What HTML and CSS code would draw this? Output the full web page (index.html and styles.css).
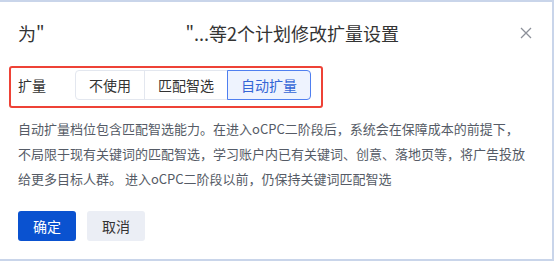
FILE: index.html
```html
<!DOCTYPE html>
<html lang="zh-CN">
<head>
  <meta charset="UTF-8" />
  <meta name="viewport" content="width=device-width, initial-scale=1.0" />
  <title>修改扩量设置</title>
  <link rel="stylesheet" href="styles.css">
</head>
<body>
  <div class="dialog">
    <div class="dialog-header">
      <h1 class="title">为"<span class="plan-name"></span>"...等2个计划修改扩量设置</h1>
      <button type="button" class="close" aria-label="关闭">
        <svg width="12" height="12" viewBox="0 0 12 12">
          <path d="M1 1 L11 11 M11 1 L1 11" stroke="#8c9099" stroke-width="1.3" fill="none" />
        </svg>
      </button>
    </div>

    <div class="field">
      <span class="field-label">扩量</span>
      <div class="segmented">
        <button type="button" class="seg">不使用</button>
        <button type="button" class="seg">匹配智选</button>
        <button type="button" class="seg active">自动扩量</button>
      </div>
    </div>

    <p class="desc">自动扩量档位包含匹配智选能力。在进入oCPC二阶段后，系统会在保障成本的前提下，<br>不局限于现有关键词的匹配智选，学习账户内已有关键词、创意、落地页等，将广告投放<br>给更多目标人群。 进入oCPC二阶段以前，仍保持关键词匹配智选</p>

    <div class="footer">
      <button type="button" class="btn btn-primary">确定</button>
      <button type="button" class="btn">取消</button>
    </div>
  </div>
</body>
</html>
```

FILE: styles.css
```css
* {
  box-sizing: border-box;
}
body {
  margin: 0;
  font-family: "Noto Sans CJK SC", "Noto Sans", sans-serif;
  color: #333333;
  background-color: #FFFFFF;
}
.dialog {
  width: 554px;
  height: 261px;
  background-color: #FFFFFF;
  border-top: 2px solid #c9d5ea;
  border-right: 2px solid #c9d5ea;
  border-bottom: 2px solid #c9d5ea;
}
.dialog-header {
  display: flex;
  align-items: center;
  justify-content: space-between;
  height: 62px;
  padding: 0 20px 0 18px;
}
.title {
  margin: 0;
  font-size: 18px;
  font-weight: normal;
  color: #333333;
}
.plan-name {
  display: inline-block;
  width: 141px;
}
.close {
  border: none;
  background: none;
  padding: 0;
  width: 12px;
  height: 12px;
  cursor: pointer;
  display: flex;
}
.field {
  display: flex;
  align-items: center;
  width: 314px;
  margin: 2px 0 0 9px;
  padding: 2px 8px 6px 7px;
  border: 2px solid #ee4236;
  border-radius: 3px;
}
.field-label {
  width: 57px;
  flex-shrink: 0;
  font-size: 14px;
  color: #333333;
}
.segmented {
  display: flex;
  flex-shrink: 0;
}
.seg {
  height: 30px;
  padding: 0 13px;
  font-family: inherit;
  font-size: 14px;
  white-space: nowrap;
  color: #333333;
  background-color: #FFFFFF;
  border: 1px solid #e3e7ef;
  margin-left: -1px;
  cursor: pointer;
}
.seg:first-child {
  margin-left: 0;
  border-radius: 4px 0 0 4px;
}
.seg:last-child {
  border-radius: 0 4px 4px 0;
}
.seg.active {
  position: relative;
  background-color: #eef3fe;
  border-color: #4f7ff0;
  color: #3466d6;
}
.desc {
  margin: 8px 0 0;
  padding: 0 0 0 18px;
  font-size: 13px;
  line-height: 25px;
  white-space: nowrap;
  color: #555b66;
}
.footer {
  display: flex;
  gap: 11px;
  padding: 20px 18px 0;
}
.btn {
  height: 30px;
  padding: 0 15px;
  font-family: inherit;
  font-size: 14px;
  color: #333333;
  background-color: #ebeef5;
  border: none;
  border-radius: 3px;
  cursor: pointer;
}
.btn-primary {
  background-color: #0a52d0;
  color: #FFFFFF;
}
```
